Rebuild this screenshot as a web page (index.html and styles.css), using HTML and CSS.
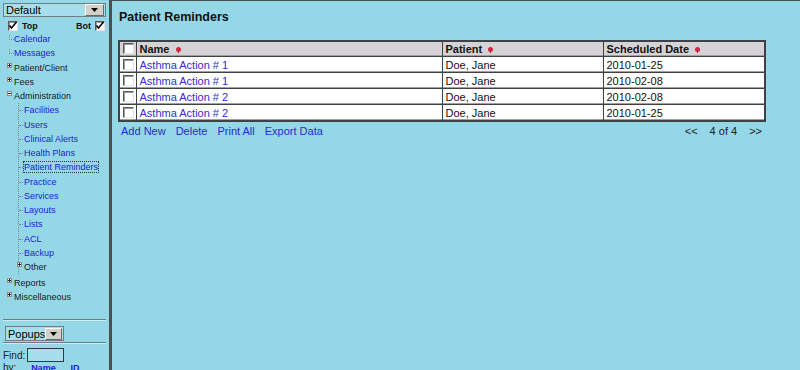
FILE: index.html
```html
<!DOCTYPE html>
<html lang="en">
<head>
  <meta charset="UTF-8" />
  <title>Patient Reminders</title>
  <link rel="stylesheet" href="styles.css">
</head>
<body>
  <div class="nav">
    <div class="pick wide"><span>Default</span><span class="drop"><svg width="7" height="4" viewBox="0 0 7 4"><path d="M0 0h7L3.5 4z" fill="#000"/></svg></span></div>

    <div class="frames">
      <label><span class="cb on"><svg width="10" height="10" viewBox="0 0 10 10"><path d="M1.5 4.5l2 2.5 5-6" stroke="#000" stroke-width="1.6" fill="none"/></svg></span><b>Top</b></label>
      <label><b>Bot</b><span class="cb on"><svg width="10" height="10" viewBox="0 0 10 10"><path d="M1.5 4.5l2 2.5 5-6" stroke="#000" stroke-width="1.6" fill="none"/></svg></span></label>
    </div>

    <ul class="tree">
      <li class="leaf"><a href="#">Calendar</a></li>
      <li class="leaf"><a href="#">Messages</a></li>
      <li><span class="pm"></span>Patient/Client</li>
      <li><span class="pm"></span>Fees</li>
      <li><span class="pm minus"></span>Administration
        <ul class="sub">
          <li><a href="#">Facilities</a></li>
          <li><a href="#">Users</a></li>
          <li><a href="#">Clinical Alerts</a></li>
          <li><a href="#">Health Plans</a></li>
          <li><a href="#" class="focus">Patient Reminders</a></li>
          <li><a href="#">Practice</a></li>
          <li><a href="#">Services</a></li>
          <li><a href="#">Layouts</a></li>
          <li><a href="#">Lists</a></li>
          <li><a href="#">ACL</a></li>
          <li><a href="#">Backup</a></li>
          <li class="branch"><span class="pm"></span>Other</li>
        </ul>
      </li>
      <li class="gap"><span class="pm"></span>Reports</li>
      <li><span class="pm"></span>Miscellaneous</li>
    </ul>

    <div class="rule first"></div>
    <div class="pick short"><span>Popups</span><span class="drop"><svg width="7" height="4" viewBox="0 0 7 4"><path d="M0 0h7L3.5 4z" fill="#000"/></svg></span></div>
    <div class="rule second"></div>

    <div class="find">Find: <span class="box"></span></div>
    <div class="by">by: <a href="#">Name</a> <a href="#">ID</a></div>
  </div>

  <div class="main">
    <h2>Patient Reminders</h2>

    <table class="grid">
      <colgroup>
        <col class="c-check"><col class="c-name"><col class="c-patient"><col class="c-date">
      </colgroup>
      <tr class="head">
        <td><span class="cb"></span></td>
        <td>Name <i class="sort"></i></td>
        <td>Patient <i class="sort"></i></td>
        <td>Scheduled Date <i class="sort"></i></td>
      </tr>
      <tr>
        <td><span class="cb"></span></td>
        <td><a href="#">Asthma Action # 1</a></td>
        <td>Doe, Jane</td>
        <td>2010-01-25</td>
      </tr>
      <tr>
        <td><span class="cb"></span></td>
        <td><a href="#">Asthma Action # 1</a></td>
        <td>Doe, Jane</td>
        <td>2010-02-08</td>
      </tr>
      <tr>
        <td><span class="cb"></span></td>
        <td><a href="#">Asthma Action # 2</a></td>
        <td>Doe, Jane</td>
        <td>2010-02-08</td>
      </tr>
      <tr>
        <td><span class="cb"></span></td>
        <td><a href="#">Asthma Action # 2</a></td>
        <td>Doe, Jane</td>
        <td>2010-01-25</td>
      </tr>
    </table>

    <div class="actions">
      <div class="links">
        <a href="#">Add New</a>
        <a href="#">Delete</a>
        <a href="#">Print All</a>
        <a href="#">Export Data</a>
      </div>
      <div class="pager">
        <span>&lt;&lt;</span>
        <span>4 of 4</span>
        <span>&gt;&gt;</span>
      </div>
    </div>
  </div>
</body>
</html>
```

FILE: styles.css
```css
html, body {
  margin: 0;
  padding: 0;
  height: 100%;
  background-color: #94d7e6;
  font-family: 'Liberation Sans', Arial, sans-serif;
  color: #111;
  overflow: hidden;
}

body {
  display: flex;
}

a {
  color: #1c1cd6;
  text-decoration: none;
}

/* left nav frame */

.nav {
  width: 109px;
  flex-shrink: 0;
  border-right: 3px solid #4a5052;
  font-size: 9px;
  display: flex;
  flex-direction: column;
}

.nav > * {
  flex-shrink: 0;
}

.pick {
  display: flex;
  align-items: center;
  justify-content: space-between;
  height: 14px;
  box-sizing: border-box;
  border: 1px solid #6f7f84;
  background-color: #a6dfeb;
  font-size: 11px;
  color: #000;
}

.pick span:first-child {
  padding-left: 2px;
}

.pick.wide {
  margin: 3px 3px 0 3px;
}

.pick.short {
  margin: 5px 0 0 5px;
  width: 59px;
  height: 15px;
}

.drop {
  width: 17px;
  height: 10px;
  margin-right: 1px;
  background-color: #d4d0c8;
  border: 1px solid;
  border-color: #fff #6a6a6a #6a6a6a #fff;
  display: flex;
  align-items: center;
  justify-content: center;
}

.frames {
  display: flex;
  justify-content: space-between;
  padding: 2px 4px 0 8px;
  height: 13px;
}

.frames label {
  display: flex;
  align-items: center;
  gap: 4px;
  font-size: 9px;
}

.cb {
  display: inline-block;
  width: 10px;
  height: 10px;
  box-sizing: border-box;
  background-color: #fff;
  border: 1px solid;
  border-color: #5a5a5a #e4e4e4 #e4e4e4 #5a5a5a;
  box-shadow: inset 1px 1px 0 #9a9a9a;
  vertical-align: middle;
  position: relative;
}

.cb svg {
  position: absolute;
  left: -1px;
  top: -1px;
}

.tree, .tree ul {
  list-style: none;
  margin: 0;
  padding: 0;
}

.tree li {
  line-height: 14.25px;
  padding-left: 7px;
  color: #1a1a1a;
  position: relative;
}

.tree li.leaf {
  padding-left: 14px;
}

.tree li.leaf::before {
  content: "";
  position: absolute;
  left: 9px;
  top: 3px;
  width: 4px;
  height: 4px;
  border-left: 1px dotted #7a8a8e;
  border-bottom: 1px dotted #7a8a8e;
}

.pm {
  display: inline-block;
  width: 5px;
  height: 5px;
  box-sizing: border-box;
  border: 1px solid #8a8a8a;
  background-color: #fff;
  margin: 0 2px 0 0;
  vertical-align: 3px;
  position: relative;
}

.pm::before, .pm::after {
  content: "";
  position: absolute;
  background-color: #222;
}

.pm::before {
  left: 0;
  top: 1px;
  width: 3px;
  height: 1px;
}

.pm::after {
  left: 1px;
  top: 0;
  width: 1px;
  height: 3px;
}

.pm.minus::after {
  display: none;
}

.tree .sub {
  margin-left: 11px;
  border-left: 1px dotted #7a8a8e;
}

.tree .sub li {
  padding-left: 5px;
}

.tree .sub li::before {
  content: "";
  position: absolute;
  left: 0;
  top: 7px;
  width: 4px;
  border-top: 1px dotted #7a8a8e;
}

.tree .sub li.branch {
  padding-left: 0;
  margin-left: -2px;
}

.tree .sub li.branch::before {
  display: none;
}

.focus {
  outline: 1px dotted #333;
}

.tree li.gap {
  margin-top: 1.5px;
}

.rule {
  margin: 0 3px;
  height: 2px;
  background: linear-gradient(#6e7c80 50%, #c8eef6 50%);
}

.rule.first {
  margin-top: 15px;
}

.rule.second {
  margin-top: 1px;
}

.find {
  display: flex;
  align-items: center;
  gap: 2px;
  padding-left: 3px;
  margin-top: 4px;
  font-size: 10px;
  color: #222;
}

.find .box {
  width: 37px;
  height: 14px;
  box-sizing: border-box;
  border: 1px solid #2d3a3e;
  background-color: #a6dfeb;
}

.by {
  padding-left: 3px;
  font-size: 10px;
  line-height: 11px;
  color: #222;
}

.by a {
  font-weight: bold;
  margin-left: 12px;
  font-size: 9px;
}

/* main frame */

.main {
  flex: 1;
  padding: 0 0 0 6px;
  border-top: 1px solid #4a5052;
}

h2 {
  font-size: 12.5px;
  margin: 8px 0 0 1px;
  line-height: 16px;
}

.grid {
  margin-top: 15px;
  width: 648px;
  border-collapse: collapse;
  border: 2px solid #3d4244;
  font-size: 11px;
  background-color: #fff;
}

.grid td {
  height: 15px;
  padding: 0 3px;
  border: 1px solid #3d4244;
  box-shadow: inset 0 -1px 0 #a0a0a0;
  line-height: 14px;
}

.grid td:first-child {
  padding: 0 0 0 3px;
}

.grid .cb {
  width: 11px;
  height: 11px;
  vertical-align: -1px;
}

.grid col.c-check { width: 17px; }
.grid col.c-name { width: 306px; }
.grid col.c-patient { width: 161px; }

.grid .head td {
  background-color: #d6d3d6;
  font-weight: bold;
  height: 14px;
}

.grid a {
  color: #3030cf;
}

.sort {
  display: inline-block;
  width: 5px;
  height: 5px;
  border-radius: 50%;
  background-color: #d8253f;
  margin-left: 3px;
  vertical-align: 1px;
  position: relative;
}

.sort::after {
  content: "";
  position: absolute;
  left: 2px;
  top: 4px;
  width: 1px;
  height: 2px;
  background-color: #b82030;
}

.actions {
  width: 648px;
  display: flex;
  justify-content: space-between;
  font-size: 11px;
  margin-top: 3px;
}

.links {
  display: flex;
  gap: 10px;
  padding-left: 3px;
}

.links a {
  color: #2a2acf;
}

.pager {
  display: flex;
  gap: 12px;
  color: #222;
  padding-right: 4px;
}
```
